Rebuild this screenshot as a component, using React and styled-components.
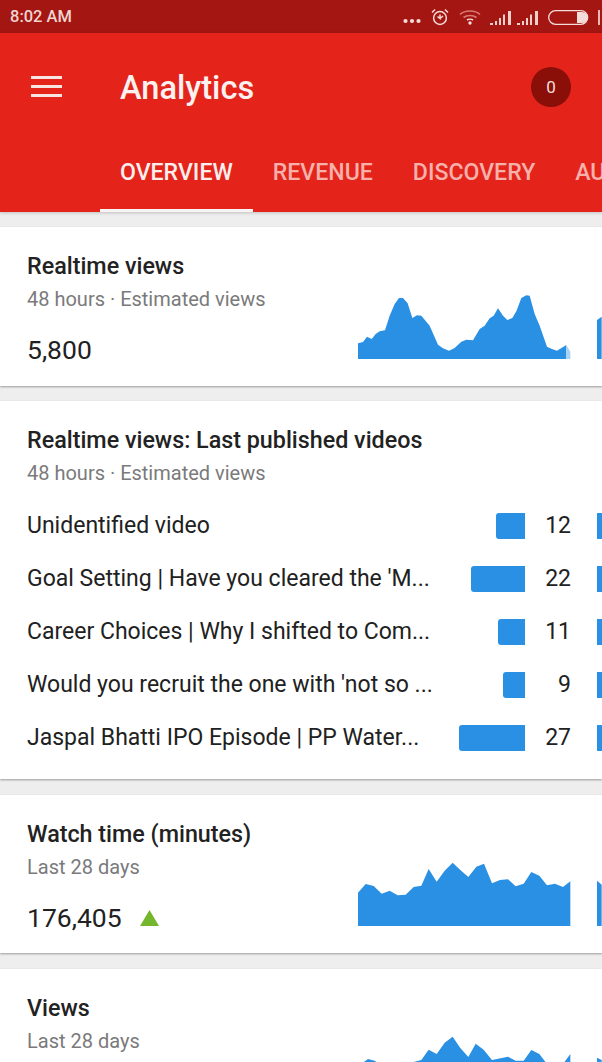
import React from "react";
import styled, { createGlobalStyle } from "styled-components";

const Global = createGlobalStyle`
  html, body { margin: 0; padding: 0; }
  body { width: 602px; height: 1062px; overflow: hidden; background: #eeeeef; font-family: Roboto, "Noto Sans", sans-serif; }
`;
const Page = styled.div`width: 602px; height: 1062px; overflow: hidden; display: flex; flex-direction: column;`;
const StatusBar = styled.div`
  height: 33px; background: #a31611; display: flex; align-items: center; flex: none;
  padding-left: 10px; color: #f0d5d2; font-size: 16.5px; font-weight: 500;
`;
const Time = styled.span`flex: 1;`;
const StatusIcon = styled.svg`display: block; flex: none; margin-left: ${p => p.$ml || 0}px; margin-top: ${p => p.$mt || 0}px;`;
const Header = styled.header`
  height: 179px; background: #e4231a; flex: none; display: flex; flex-direction: column;
  box-sizing: border-box; box-shadow: 0 1px 3px rgba(0,0,0,.2);
`;
const Toolbar = styled.div`display: flex; align-items: center; height: 107px; flex: none; padding-left: 31px; box-sizing: border-box;`;
const Menu = styled.div`width: 31px; height: 21px; display: flex; flex-direction: column; justify-content: space-between;
  & > i { display: block; height: 3px; background: #f8e4e2; }`;
const Title = styled.h1`
  margin: 2px 0 0 58px; flex: 1; color: #fbf1f0; font-size: 32.6px; font-weight: 500; line-height: 40px;
`;
const Badge = styled.div`
  width: 40px; height: 40px; margin-right: 31px; border-radius: 50%; background: #8a0f09; color: #f2dedc;
  font-size: 17px; display: flex; align-items: center; justify-content: center;
`;
const Tabs = styled.nav`display: flex; height: 72px; padding-left: 100px; overflow: hidden; flex: none;`;
const Tab = styled.div`
  flex: none; padding: 0 20px; height: 72px; box-sizing: border-box; font-size: 23.1px; font-weight: 500; line-height: 65px;
  color: ${p => p.$active ? "#fbeeed" : "#f7b0aa"};
  border-bottom: 3px solid ${p => p.$active ? "#f6f4f4" : "transparent"};
`;
const Cards = styled.main`display: flex; flex-direction: column; padding-top: 15px;`;
const Card = styled.section`
  background: #fff; flex: none; box-shadow: 0 1px 2px rgba(0,0,0,.35); height: ${p => p.$h}px;
  margin-bottom: ${p => p.$gap || 15}px;
  display: flex; overflow: hidden; box-sizing: border-box;
`;
const Info = styled.div`flex: none; width: 358px; box-sizing: border-box; padding: 25px 0 0 27px;`;
const CardTitle = styled.h2`margin: 0; font-size: 23.3px; font-weight: 500; line-height: 28px; color: #222; white-space: nowrap;`;
const Sub = styled.div`margin-top: 6px; font-size: 20px; line-height: 26px; color: #7a7a7c; white-space: nowrap;`;
const Metric = styled.div`margin-top: 21px; font-size: 26.5px; line-height: 34px; color: #212121; display: flex; align-items: center; gap: 18px;`;
const Spark = styled.svg`display: block; flex: none; fill: #2a90e4;`;
const ListHead = styled.div`padding: 25px 0 0 27px;`;
const Col = styled.div`display: flex; flex-direction: column; width: 100%;`;
const Rows = styled.div`display: flex; flex-direction: column; margin-top: 13px;`;
const Row = styled.div`display: flex; align-items: center; height: 53px; padding-left: 27px; flex: none;`;
const RowLabel = styled.div`width: 405px; flex: none; font-size: 23px; color: #212121; white-space: nowrap; overflow: hidden;`;
const BarSlot = styled.div`width: 93px; flex: none; display: flex; justify-content: flex-end;`;
const Bar = styled.div`height: 26px; background: #2a90e4; border-radius: 3px 0 0 3px;`;
const Num = styled.div`width: 46px; flex: none; text-align: right; font-size: 23px; color: #212121;`;
const NextBar = styled.div`width: 5px; height: 26px; margin-left: 26px; flex: none; background: #2a90e4;`;

const rows = [
  ["Unidentified video", 29, 12],
  ["Goal Setting | Have you cleared the 'M...", 54, 22],
  ["Career Choices | Why I shifted to Com...", 27, 11],
  ["Would you recruit the one with 'not so ...", 22, 9],
  ["Jaspal Bhatti IPO Episode | PP Water...", 66, 27],
];

const C1 = "55,188 70,184 82,168 96,175 108,160 120,152 136,149 150,105 165,70 178,52 190,52 204,68 218,112 232,104 245,105 270,135 295,192 310,203 328,210 345,202 365,183 380,177 400,179 420,145 435,135 450,113 462,105 475,83 490,105 503,118 518,112 530,92 545,52 560,44 570,45 585,100 600,135 622,198 635,204 652,210 680,193 680,235 55,235";
const C3 = "55,128 78,102 102,108 126,131 150,122 174,136 198,134 222,111 245,107 267,57 291,95 315,62 339,38 362,60 386,81 410,50 433,41 457,100 481,90 505,88 528,109 552,101 575,66 599,77 622,106 646,101 670,111 692,94 692,228 55,228";
const C4 = "55,136 70,126 85,115 105,120 130,140 180,140 225,123 245,118 267,87 291,100 315,66 339,48 362,82 386,109 408,69 432,87 457,118 505,108 528,120 552,120 575,88 599,100 622,130 670,130 692,100 692,160 55,160";

const Chart = ({ h, top, poly, children }) => (
  <Spark width="244" height={h} viewBox={`55 ${top} 732 ${h * 3}`} preserveAspectRatio="none">
    <polygon points={poly} />
    {children}
  </Spark>
);

const ChartSlot = styled.div`flex: none; width: 244px; padding-top: ${p => p.$t}px;`;

const Signal = ({ ml }) => (
  <StatusIcon $ml={ml} $mt={2} width="22" height="15" viewBox="0 0 22 15" fill="#f0d0cd">
    <path d="M0 13h3v2H0zM5 11h2v4H5zM9 8h2v7H9zM13 4.500h2V15h-2zM18 1h3v14h-3z" />
  </StatusIcon>
);

export default function App() {
  return (
    <Page>
      <Global />
      <StatusBar>
        <Time>8:02 AM</Time>
        <StatusIcon $mt={9} width="18" height="6" viewBox="0 0 18 6" fill="#f4dcda"><circle cx="2.5" cy="3" r="2.1"/><circle cx="9" cy="3" r="2.1"/><circle cx="15.5" cy="3" r="2.1"/></StatusIcon>
        <StatusIcon $ml={10} width="18" height="18" viewBox="0 0 18 18" fill="none" stroke="#f4dcda" strokeWidth="1.5">
          <circle cx="9" cy="10" r="6.4"/><path d="M9 6.5V10.500L6.500 8.500M9 10.500L12 8M1 4.500 4 1.500M17 4.500 14 1.500"/>
        </StatusIcon>
        <StatusIcon $ml={10} width="22" height="16" viewBox="0 0 22 16" fill="none" stroke="#d97a74" strokeWidth="1.6">
          <path d="M1 5.500C6 .8 16 .8 21 5.500M4.500 8.500C8 5.800 14 5.800 17.500 8.500"/><path stroke="#f4dcda" d="M8 11C9.500 10 12.500 10 14 11"/><circle cx="11" cy="14" r="1.700" fill="#f4dcda" stroke="none"/>
        </StatusIcon>
        <Signal ml={9} />
        <Signal ml={5} />
        <StatusIcon $ml={9} $mt={1} width="42" height="15" viewBox="0 0 42 15">
          <rect x=".7" y=".7" width="39" height="13.600" rx="6.800" fill="none" stroke="#f4dcda" strokeWidth="1.3"/>
          <path d="M29 2h5a5.500 5.500 0 0 1 0 11h-5z" fill="#f4dcda"/>
        </StatusIcon>
        <StatusIcon $ml={8} $mt={1} width="4" height="15" viewBox="0 0 4 15" fill="#e8b9b5"><rect width="2" height="15"/></StatusIcon>
      </StatusBar>
      <Header>
        <Toolbar>
          <Menu><i /><i /><i /></Menu>
          <Title>Analytics</Title>
          <Badge>0</Badge>
        </Toolbar>
        <Tabs>
          <Tab $active>OVERVIEW</Tab>
          <Tab>REVENUE</Tab>
          <Tab>DISCOVERY</Tab>
          <Tab>AUDIENCE</Tab>
        </Tabs>
      </Header>
      <Cards>
        <Card $h={159}>
          <Info>
            <CardTitle>Realtime views</CardTitle>
            <Sub>48 hours · Estimated views</Sub>
            <Metric>5,800</Metric>
          </Info>
          <ChartSlot $t={66}>
            <Chart h={66} top={37} poly={C1}>
              <polygon points="680,193 692,213 692,235 680,235" fill="#a9d2f3" />
              <polygon points="772,118 786,108 786,235 772,235" />
            </Chart>
          </ChartSlot>
        </Card>
        <Card $h={378} $gap={16}>
          <Col>
            <ListHead>
              <CardTitle>Realtime views: Last published videos</CardTitle>
              <Sub>48 hours · Estimated views</Sub>
            </ListHead>
            <Rows>
              {rows.map(([label, w, n]) => (
                <Row key={label}>
                  <RowLabel>{label}</RowLabel>
                  <BarSlot><Bar style={{ width: w }} /></BarSlot>
                  <Num>{n}</Num>
                  <NextBar />
                </Row>
              ))}
            </Rows>
          </Col>
        </Card>
        <Card $h={158} $gap={16}>
          <Info>
            <CardTitle>Watch time (minutes)</CardTitle>
            <Sub>Last 28 days</Sub>
            <Metric>176,405
              <svg width="19" height="16" viewBox="0 0 19 16"><polygon points="9.500,0 19,16 0,16" fill="#74b72e" /></svg>
            </Metric>
          </Info>
          <ChartSlot $t={65}>
            <Chart h={66} top={30} poly={C3}>
              <polygon points="772,92 786,104 786,228 772,228" />
            </Chart>
          </ChartSlot>
        </Card>
        <Card $h={120}>
          <Info>
            <CardTitle>Views</CardTitle>
            <Sub>Last 28 days</Sub>
          </Info>
          <ChartSlot $t={64}>
            <Chart h={40} top={37} poly={C4}>
              <polygon points="772,111 786,118 786,160 772,160" />
            </Chart>
          </ChartSlot>
        </Card>
      </Cards>
    </Page>
  );
}
